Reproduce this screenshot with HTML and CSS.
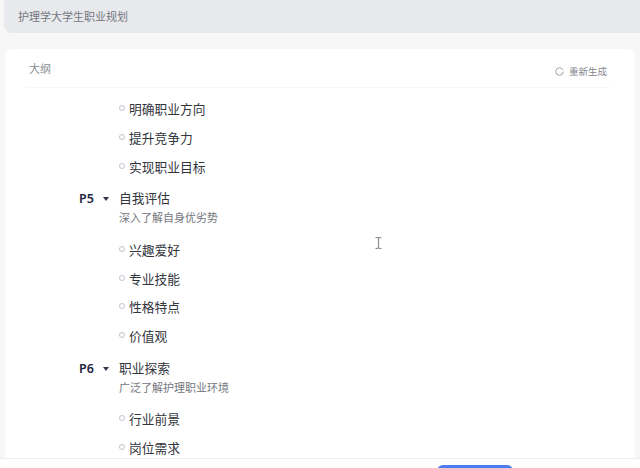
FILE: index.html
```html
<!DOCTYPE html>
<html lang="zh">
<head>
<meta charset="utf-8">
<title>大纲</title>
<link rel="stylesheet" href="styles.css">
</head>
<body>
<div class="page">
  <header class="topic">护理学大学生职业规划</header>
  <main class="card">
    <div class="card-head">
      <span class="card-title">大纲</span>
      <span class="regen"><svg class="regen-icon" width="9" height="9" viewBox="0 0 10 10"><circle cx="5" cy="5" r="4.2" fill="none" stroke="#8a8d96" stroke-width="0.9" stroke-dasharray="24 2.4"/></svg>重新生成</span>
    </div>
    <div class="outline">
      <div class="item">明确职业方向</div>
      <div class="item">提升竞争力</div>
      <div class="item">实现职业目标</div>
      <section class="part">
        <span class="page-no">P5</span><span class="caret"></span>
        <div><div class="part-title">自我评估</div><div class="part-sub">深入了解自身优劣势</div></div>
      </section>
      <div class="item">兴趣爱好</div>
      <div class="item">专业技能</div>
      <div class="item">性格特点</div>
      <div class="item">价值观</div>
      <section class="part">
        <span class="page-no">P6</span><span class="caret"></span>
        <div><div class="part-title">职业探索</div><div class="part-sub">广泛了解护理职业环境</div></div>
      </section>
      <div class="item">行业前景</div>
      <div class="item">岗位需求</div>
    </div>
  </main>
  <footer class="footer"><div class="primary"></div></footer>
</div>
<svg class="ibeam" width="7" height="12" viewBox="0 0 7 12"><path d="M0.5 0.5H2.5L3.5 1.5L4.5 0.5H6.5M3.5 1.5V10.5M0.5 11.5H2.5L3.5 10.5L4.5 11.5H6.5" fill="none" stroke="#8f8f8f" stroke-width="1.2"/></svg>
</body>
</html>
```
FILE: styles.css
```css
* { box-sizing: border-box; }
html, body { margin: 0; height: 468px; overflow: hidden; }
body {
  background: #f7f7f8;
  font-family: "Noto Sans CJK SC", "Noto Sans", sans-serif;
  color: #33353c;
  position: relative;
}
.page { height: 468px; display: flex; flex-direction: column; }
.topic {
  height: 33px;
  margin-left: 4px;
  padding: 8px 0 0 14px;
  flex: none;
  background: #e8e9ed;
  border-bottom-left-radius: 8px;
  font-size: 11px;
  line-height: 16px;
  color: #74767e;
}
.card {
  height: 409px;
  margin: 16px 5px 0;
  padding: 0 24px 0 20px;
  flex: none;
  background: #fff;
  border-radius: 8px 8px 0 0;
  overflow: hidden;
}
.card-head {
  height: 39px;
  padding: 11px 0 0 4px;
  display: flex;
  justify-content: space-between;
  align-items: flex-start;
  border-bottom: 1px solid #f8f8f9;
}
.card-title { font-size: 11px; line-height: 16px; color: #8c8e96; }
.regen {
  display: flex;
  align-items: center;
  gap: 5px;
  margin: 4px 4px 0 0;
  font-size: 9.5px;
  line-height: 14px;
  color: #85878f;
}
.outline { padding-left: 54px; padding-top: 6px; }
.item {
  height: 28.75px;
  padding-left: 50px;
  font-size: 12.75px;
  line-height: 29px;
  color: #33353c;
  position: relative;
}
.item::before {
  content: "";
  position: absolute;
  left: 40px;
  top: 11px;
  width: 4px;
  height: 4px;
  border: 1px solid #c0c3d0;
  border-radius: 50%;
}
.part {
  display: flex;
  align-items: flex-start;
  padding-top: 8px;
  height: 54.5px;
}
.page-no {
  width: 24px;
  margin-top: 1px;
  font-family: "Noto Sans", sans-serif;
  font-size: 12.5px;
  font-weight: 600;
  line-height: 19px;
  color: #1f2440;
}
.caret {
  width: 0;
  height: 0;
  margin: 9px 10px 0 0;
  border-left: 3px solid transparent;
  border-right: 3px solid transparent;
  border-top: 4px solid #33384d;
}
.part-title { font-size: 12.75px; line-height: 19px; color: #33353c; }
.part-sub { font-size: 11px; line-height: 19px; margin-top: 1px; color: #74767e; }
.footer {
  flex: 1;
  background: #fff;
  border-top: 1px solid #efeff1;
  padding: 6px 0 0 437px;
}
.primary {
  width: 76px;
  height: 16px;
  border-radius: 6px 6px 0 0;
  background: #4a7df0;
}
.ibeam { position: absolute; left: 375px; top: 237px; }
```
